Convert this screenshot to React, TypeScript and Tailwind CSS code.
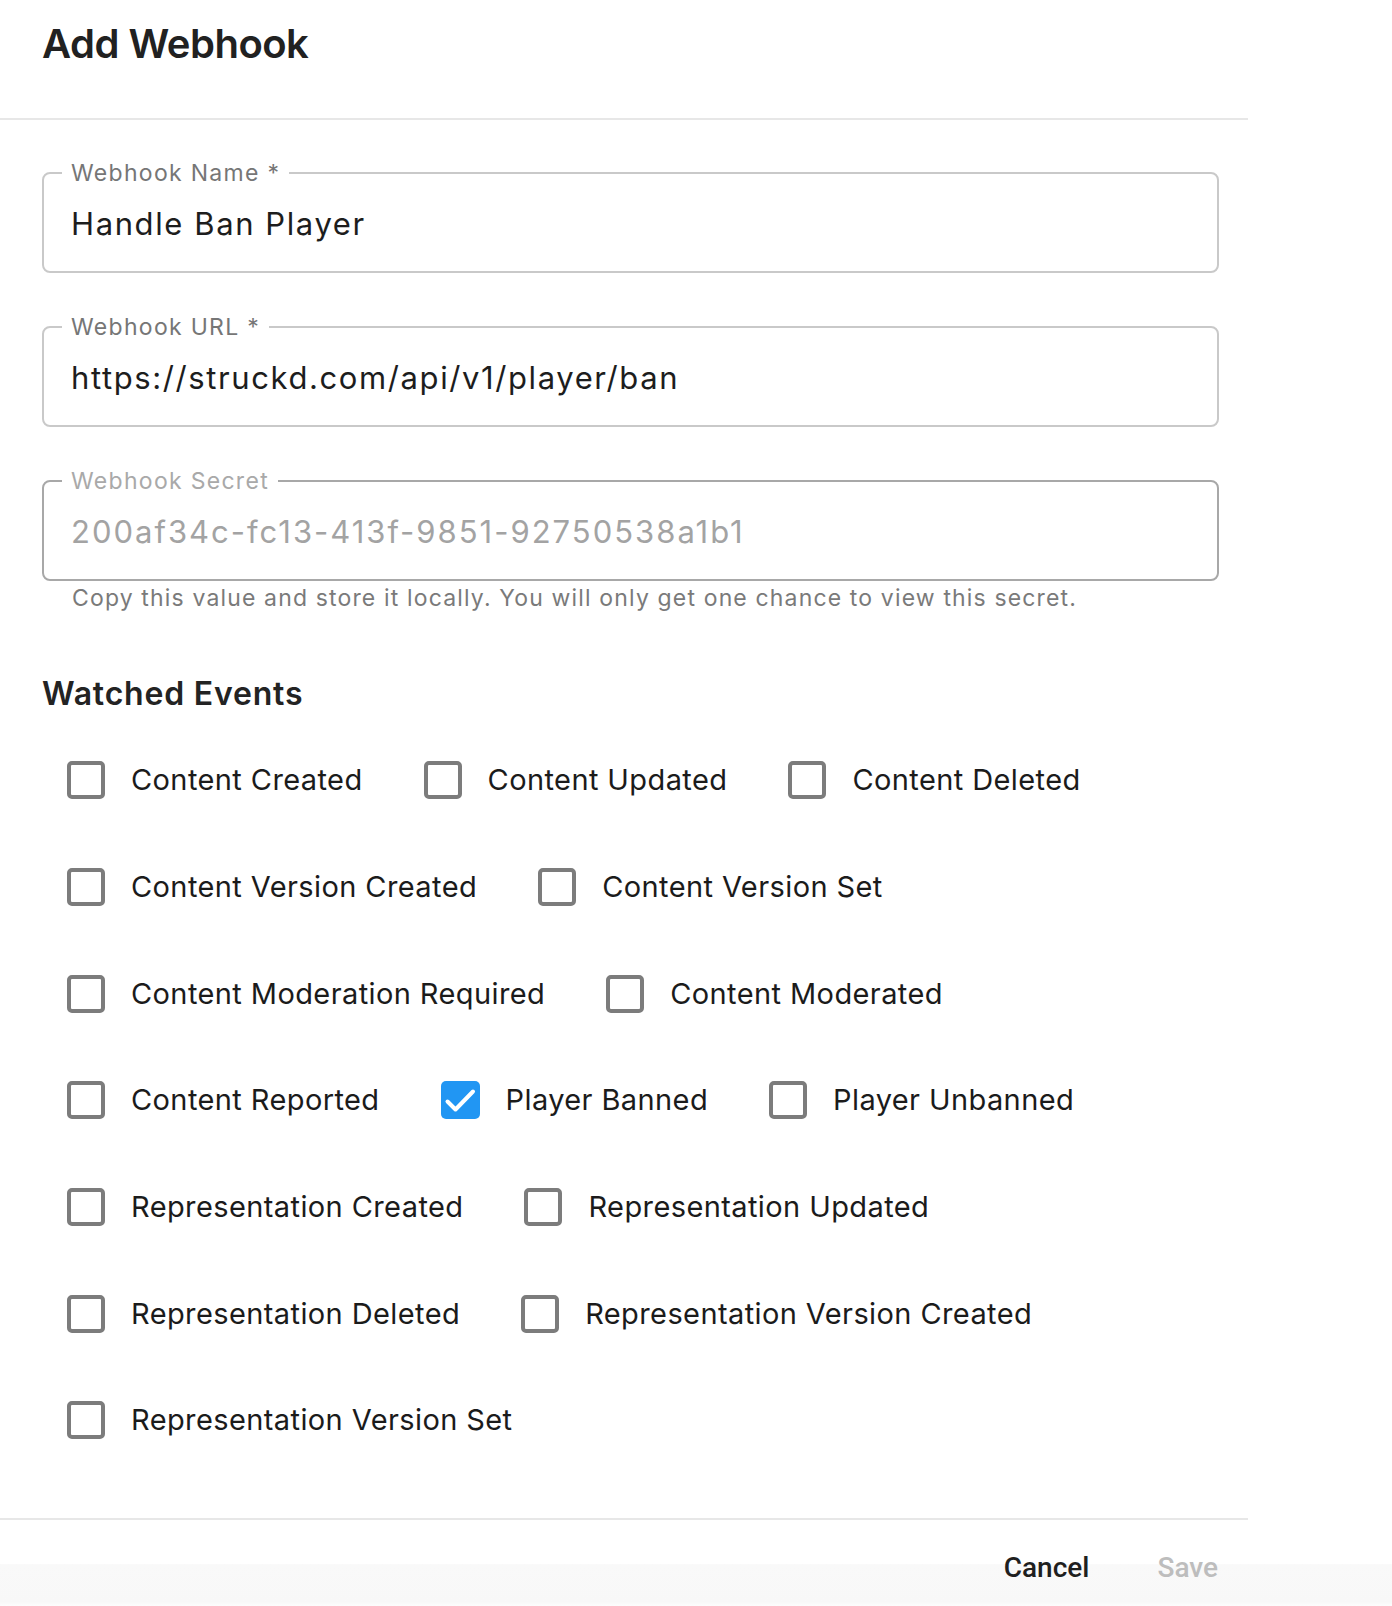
type Ev = { label: string; checked?: boolean };

const rows: Ev[][] = [
  [{ label: "Content Created" }, { label: "Content Updated" }, { label: "Content Deleted" }],
  [{ label: "Content Version Created" }, { label: "Content Version Set" }],
  [{ label: "Content Moderation Required" }, { label: "Content Moderated" }],
  [{ label: "Content Reported" }, { label: "Player Banned", checked: true }, { label: "Player Unbanned" }],
  [{ label: "Representation Created" }, { label: "Representation Updated" }],
  [{ label: "Representation Deleted" }, { label: "Representation Version Created" }],
  [{ label: "Representation Version Set" }],
];

function Field({ label, value, disabled }: { label: string; value: string; disabled?: boolean }) {
  return (
    <div
      className={
        "relative h-[101px] rounded-[8px] border-2 flex items-center pl-[27px] pt-[2px] " +
        (disabled ? "border-[#a8a8a8]" : "border-[#c9c9c9]")
      }
    >
      <span
        className={
          "absolute left-[18px] top-[-12px] bg-white px-[9px] text-[23px] leading-[23px] tracking-[1.3px] " +
          (disabled ? "text-[#a9a9a9]" : "text-[#767676]")
        }
      >
        {label}
      </span>
      <span
        className={
          "text-[31px] leading-[36px] " +
          (disabled ? "text-[#a3a3a3] tracking-[2px]" : "text-[#1d1d1d] tracking-[1.6px]")
        }
      >
        {value}
      </span>
    </div>
  );
}

function EventBox({ label, checked }: Ev) {
  return (
    <div className="flex items-center mr-[61px]">
      {checked ? (
        <div className="w-[39px] h-[38px] rounded-[5px] bg-[#2196f3]">
          <svg width="39" height="38" viewBox="0 0 39 38" fill="none">
            <path d="M6.5 20.5 L14.5 28.5 L32 10.5" stroke="white" strokeWidth="4" strokeLinecap="round" strokeLinejoin="round" />
          </svg>
        </div>
      ) : (
        <div className="w-[38px] h-[38px] rounded-[5px] border-[4px] border-[#7c7c7c]" />
      )}
      <span className="ml-[26px] text-[29px] leading-[36px] tracking-[0.4px] text-[#1b1b1b]">{label}</span>
    </div>
  );
}

export default function App() {
  return (
    <div className="w-[1392px] min-h-[1606px] bg-white flex flex-col" style={{ fontFamily: "Inter, 'Noto Sans', sans-serif" }}>
      <div className="w-[1248px]">
        <div className="h-[118px] pt-[20px] px-[42px]">
          <h1 className="text-[40px] leading-[48px] font-semibold tracking-[-0.5px] text-[#212121]">Add Webhook</h1>
        </div>
        <div className="h-[2px] bg-[#e7e7e7]" />

        <div className="pr-[29px] pl-[42px] pt-[52px]">
          <Field label="Webhook Name *" value="Handle Ban Player" />
          <div className="h-[53px]" />
          <Field label="Webhook URL *" value="https://struckd.com/api/v1/player/ban" />
          <div className="h-[53px]" />
          <Field label="Webhook Secret" value="200af34c-fc13-413f-9851-92750538a1b1" disabled />
          <p className="mt-[6px] pl-[30px] text-[23px] leading-[23px] tracking-[1.15px] text-[#7a7a7a]">
            Copy this value and store it locally. You will only get one chance to view this secret.
          </p>

          <h2 className="mt-[68px] text-[32px] leading-[32px] font-semibold tracking-[0.8px] text-[#232323]">Watched Events</h2>

          <div className="mt-[17px] pl-[25px]">
            {rows.map((row, i) => (
              <div key={i} className="h-[106.7px] flex items-center">
                {row.map((ev) => (
                  <EventBox key={ev.label} {...ev} />
                ))}
              </div>
            ))}
          </div>
        </div>
      </div>

      <div className="mt-[44px] flex-1 bg-[linear-gradient(to_bottom,#ffffff_52%,#f9f9f9_53%,#f8f8f8_95%,#fdfdfd)]">
        <div className="w-[1248px] h-[2px] bg-[#e7e7e7]" />
        <div
          className="w-[1248px] flex justify-end items-center pt-[34px] pr-[30px] gap-[68px]"
          style={{ fontFamily: "Roboto, 'Liberation Sans', sans-serif" }}
        >
          <button className="text-[28px] leading-[28px] font-medium text-[#1f1f1f]">Cancel</button>
          <button className="text-[28px] leading-[28px] font-medium text-[#bdbdbd]">Save</button>
        </div>
      </div>
    </div>
  );
}
